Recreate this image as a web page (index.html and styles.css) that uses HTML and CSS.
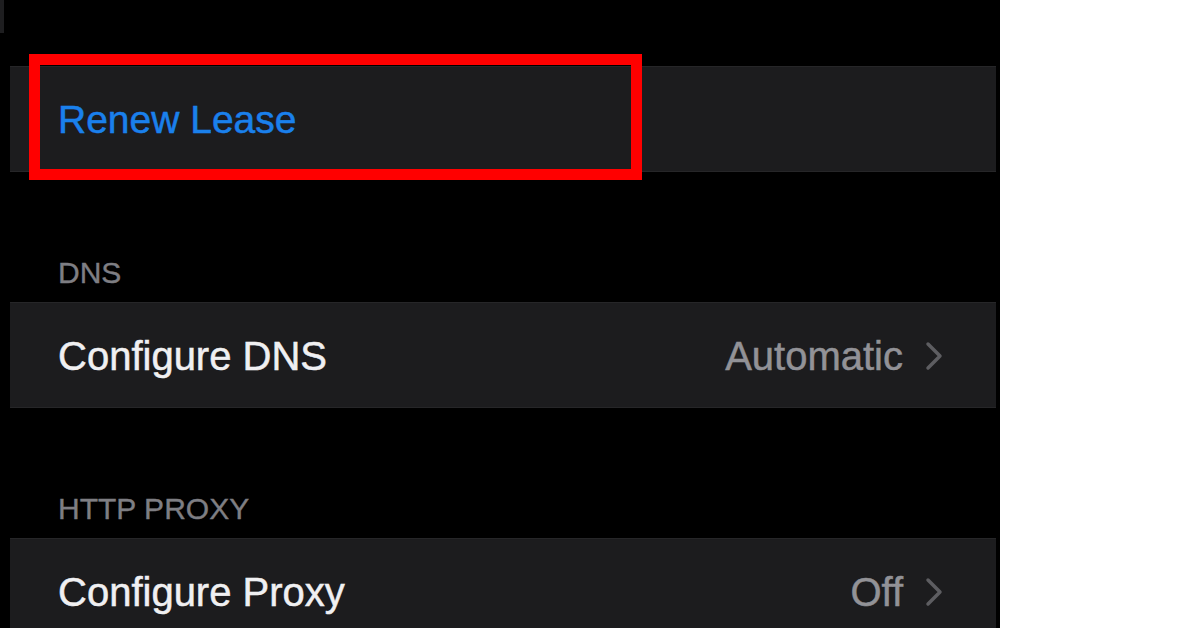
FILE: index.html
```html
<!DOCTYPE html>
<html>
<head>
<meta charset="utf-8">
<link rel="stylesheet" href="styles.css">
</head>
<body>
<div class="screen">
  <div class="stub"></div>
  <div class="list">
    <div class="row first">
      <span class="action">Renew Lease</span>
    </div>
    <div class="header">DNS</div>
    <div class="row">
      <span class="label">Configure DNS</span>
      <span class="detail">Automatic
        <svg class="chev" width="18" height="30" viewBox="0 0 18 30"><polyline points="3,3 15,15 3,27" fill="none" stroke="#5d5d61" stroke-width="3.5" stroke-linecap="round" stroke-linejoin="round"/></svg>
      </span>
    </div>
    <div class="header">HTTP PROXY</div>
    <div class="row">
      <span class="label">Configure Proxy</span>
      <span class="detail">Off
        <svg class="chev" width="18" height="30" viewBox="0 0 18 30"><polyline points="3,3 15,15 3,27" fill="none" stroke="#5d5d61" stroke-width="3.5" stroke-linecap="round" stroke-linejoin="round"/></svg>
      </span>
    </div>
  </div>
  <div class="highlight"></div>
</div>
</body>
</html>
```
FILE: styles.css
```css
html, body {
  margin: 0;
  padding: 0;
  background: #ffffff;
}
.screen {
  position: relative;
  width: 1000px;
  height: 628px;
  background: #000000;
  overflow: hidden;
  font-family: "Liberation Sans", Arial, sans-serif;
}
.stub {
  width: 4px;
  height: 33px;
  background: #1e1e20;
}
.list {
  padding: 33px 4px 0 10px;
}
.row {
  box-sizing: border-box;
  height: 106px;
  background: #1c1c1e;
  border-top: 1px solid #262628;
  border-bottom: 1px solid #262628;
  display: flex;
  align-items: center;
  justify-content: space-between;
  padding: 2px 53px 0 48px;
  font-size: 40px;
  -webkit-text-stroke: 0.5px currentColor;
}
.action {
  color: #1a80ec;
  font-size: 39px;
}
.label {
  color: #f0f0f2;
}
.detail {
  display: flex;
  align-items: center;
  gap: 22px;
  color: #929297;
}
.chev {
  display: block;
}
.header {
  box-sizing: border-box;
  height: 130px;
  display: flex;
  align-items: flex-end;
  padding: 0 0 14px 48px;
  font-size: 30px;
  line-height: 30px;
  color: #7e7e83;
  -webkit-text-stroke: 0.4px currentColor;
}
.header + .row + .header {
  height: 130px;
}
.highlight {
  position: absolute;
  left: 29px;
  top: 54px;
  width: 613px;
  height: 126px;
  box-sizing: border-box;
  border: 11px solid #ff0000;
}
```
